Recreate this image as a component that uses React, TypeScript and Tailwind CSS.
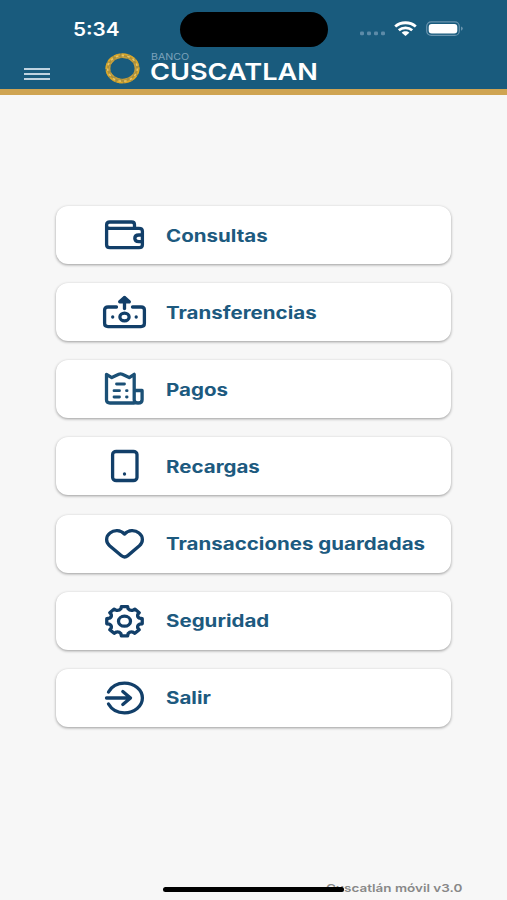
import type { ReactNode } from "react";

interface MenuEntry {
	readonly label: string;
	readonly icon: ReactNode;
}

const GEAR_TEETH = 8;

const gearPoint = (degrees: number, radius: number) => {
	const angle = (degrees * Math.PI) / 180;

	return `${(24.5 + Math.cos(angle) * 18 * radius).toFixed(2)} ${(20.2 + Math.sin(angle) * 14.8 * radius).toFixed(2)}`;
};

const gearPath = () => {
	let path = "";

	for (let tooth = 0; tooth < GEAR_TEETH; tooth++) {
		const center = (tooth * 360) / GEAR_TEETH - 90;

		path += `${tooth === 0 ? "M" : "L"}${gearPoint(center - 10, 1)}L${gearPoint(center + 10, 1)}`;
		path += `L${gearPoint(center + 13.5, 0.86)}Q${gearPoint(center + 22.5, 0.76)} ${gearPoint(center + 31.5, 0.86)}`;
	}

	return `${path}Z`;
};

const entries: readonly MenuEntry[] = [
	{
		label: "Consultas",
		icon: (
			<>
				<path d="M42.4 15.8v14q0 2.9-3.3 2.9H9.9q-3.3 0-3.3-2.9V10q0-3 3.3-3h21.7q2.9 0 2.9 2.7v3.6M6.6 11q0 2.3 3.3 2.3h29q3.5 0 3.5 2.8" />
				<path d="M42.4 20h-3.6q-4 0-4 3.3t4 3.3h3.6" />
			</>
		),
	},
	{
		label: "Transferencias",
		icon: (
			<>
				<path d="M16.5 15H8q-3.4 0-3.4 3v13.6q0 3 3.4 3h33q3.4 0 3.4-3V18q0-3-3.4-3h-8.5" />
				<path d="M24.5 16.5V6" />
				<path d="M19.7 9.8l4.8-4.3 4.8 4.3z" fill="currentColor" />
				<ellipse cx="24.5" cy="25" rx="4.6" ry="3.9" />
				<path d="M12.7 25h.01M36.2 25h.01" />
			</>
		),
	},
	{
		label: "Pagos",
		icon: (
			<g className="text-[#1b5076]" stroke="currentColor">
				<path d="M34.2 34H10q-3.5 0-3.5-3V5.3l5.3 3.3 7-3.3q1.7-.7 3.4 0l7 3.3 5-3.3v25.4q0 3.3 3.9 3.3 4 0 4-3.3V21.5h-7.5" />
				<path d="M16.5 15h8M14 21.7h5.5M14 28h5.5M26.5 21.7h.6M26.5 28h.6" strokeWidth="2.8" />
			</g>
		),
	},
	{
		label: "Recargas",
		icon: (
			<>
				<rect x="12.6" y="5.5" width="24.4" height="29" rx="3.6" ry="3" />
				<path d="M24.5 28h.01" />
			</>
		),
	},
	{
		label: "Transacciones guardadas",
		icon: (
			<path d="M24.5 10.1C20.5 5.7 14 5.7 10 9c-4.7 3.7-4.2 9.5-.4 12.8l11.6 9.8q3.3 2.7 6.6 0l11.6-9.8c3.8-3.3 4.3-9.1-.4-12.8-4-3.3-10.5-3.3-14.5 1.1z" />
		),
	},
	{
		label: "Seguridad",
		icon: (
			<>
				<path d={gearPath()} />
				<ellipse cx="24.5" cy="20.2" rx="6" ry="5" />
			</>
		),
	},
	{
		label: "Salir",
		icon: (
			<>
				<path d="M8.5 14C11.5 8.7 17.6 5.2 24.5 5.2 34.4 5.2 42.4 11.8 42.4 20S34.4 34.8 24.5 34.8C17.6 34.8 11.5 31.3 8.5 26" />
				<path d="M6.5 20h24M22.8 13.5l7.7 6.5-7.7 6.5" />
			</>
		),
	},
];

const StatusBar = () => (
	<div className="flex h-[47px] items-start pr-[44px] pl-[73px] pt-3">
		<div className="w-[107px] pt-1.5">
			<span className="inline-block origin-left scale-x-[1.15] text-[18px] leading-[23px] font-semibold text-white">5:34</span>
		</div>
		<div className="h-[35px] w-[148px] rounded-full bg-black" />
		<div className="ml-auto flex items-start pt-[9px]">
			<svg className="mt-2.5 mr-2 h-[5px] w-[27px] text-[#5d8ba8]" viewBox="0 0 27 5" fill="currentColor">
				<rect x="1" y="0.5" width="4" height="3.7" rx="1.2" />
				<rect x="8" y="0.5" width="4" height="3.7" rx="1.2" />
				<rect x="15" y="0.5" width="4" height="3.7" rx="1.2" />
				<rect x="22" y="0.5" width="4" height="3.7" rx="1.2" />
			</svg>
			<svg className="mr-[9px] h-[15px] w-[23px] text-white" viewBox="0 0 23 15" fill="none" stroke="currentColor" strokeWidth="2.8">
				<path d="M1.2 5.5C7 .5 16 .5 21.8 5.5" />
				<path d="M4.8 9.2c3.7-3.2 9.7-3.2 13.4 0" />
				<path d="M7.7 11.7c2-1.9 5.6-1.9 7.6 0L11.5 15z" fill="currentColor" stroke="none" />
			</svg>
			<svg className="h-[15px] w-[37px]" viewBox="0 0 37 15" fill="none">
				<rect x="0.7" y="0.8" width="32.6" height="13.6" rx="4.5" stroke="#6994ae" strokeWidth="1.2" />
				<rect x="2.7" y="2.9" width="28.6" height="9.5" rx="3" fill="#fff" />
				<path d="M35 5.6q1.8.5 1.8 2T35 9.7z" fill="#6994ae" />
			</svg>
		</div>
	</div>
);

const Ring = () => (
	<svg className="h-[31px] w-[35px]" viewBox="0 0 35 31" fill="none">
		<ellipse cx="17.5" cy="15.4" rx="14.6" ry="12.7" stroke="#a8903f" strokeWidth="4.8" />
		<ellipse cx="17.5" cy="15.4" rx="16.2" ry="14.1" stroke="#dba828" strokeWidth="1.6" strokeDasharray="6 1.8" />
		<ellipse cx="17.5" cy="15.4" rx="14.8" ry="12.8" stroke="#e8c364" strokeWidth="1.6" strokeDasharray="2.5 3.3" />
		<ellipse cx="17.5" cy="15.4" rx="12.9" ry="11.1" stroke="#c99f3a" strokeWidth="1.2" strokeDasharray="5 2" />
	</svg>
);

const Header = () => (
	<header className="h-[95px] border-b-[6px] border-[#cfa452] bg-[#195b7d]">
		<StatusBar />
		<div className="flex items-start pl-[24px]">
			<button aria-label="Menu" className="mt-[21px] flex w-[26px] flex-col gap-[3px]">
				<span className="h-[2px] bg-[#bfd3e0]" />
				<span className="h-[2px] bg-[#bfd3e0]" />
				<span className="h-[2px] bg-[#bfd3e0]" />
			</button>
			<div className="mt-1.5 ml-[55px]">
				<Ring />
			</div>
			<div className="mt-[5px] ml-[10px] flex flex-col items-start whitespace-nowrap">
				<span className="ml-px origin-left scale-x-[1.18] text-[9px] leading-[9px] text-[#7ba2bb]">BANCO</span>
				<span className="mt-px origin-left scale-x-[1.18] text-[23px] leading-[20px] font-semibold text-white">CUSCATLAN</span>
			</div>
		</div>
	</header>
);

const MenuCard = ({ label, icon }: MenuEntry) => (
	<button className="flex h-[58px] w-full items-center rounded-xl bg-white pl-11 text-left shadow-[0_1px_3px_rgba(0,0,0,0.38)]">
		<svg
			className="h-10 w-12 shrink-0 text-[#123f69]"
			viewBox="0 0 48 40"
			fill="none"
			stroke="currentColor"
			strokeWidth="3.3"
			strokeLinecap="round"
			strokeLinejoin="round"
		>
			{icon}
		</svg>
		<span className="mt-px ml-[18px] origin-left scale-x-[1.207] text-[17px] leading-6 font-bold whitespace-nowrap text-[#1d5a7f]">
			{label}
		</span>
	</button>
);

export default function App() {
	return (
		<div className="flex h-[900px] w-[507px] flex-col overflow-hidden bg-[#f7f7f7] font-['Inter',sans-serif]">
			<Header />
			<main className="flex flex-col gap-[19.15px] px-[56px] pt-[111px]">
				{entries.map((entry) => (
					<MenuCard key={entry.label} {...entry} />
				))}
			</main>
			<footer className="relative mt-auto flex h-5 justify-end pr-[45px]">
				<span className="origin-right scale-x-[1.225] text-[11px] leading-4 font-semibold text-[#888]">Cuscatlán móvil v3.0</span>
				<div className="absolute top-[7px] left-[163px] h-[5px] w-[181px] rounded-full bg-black" />
			</footer>
		</div>
	);
}
